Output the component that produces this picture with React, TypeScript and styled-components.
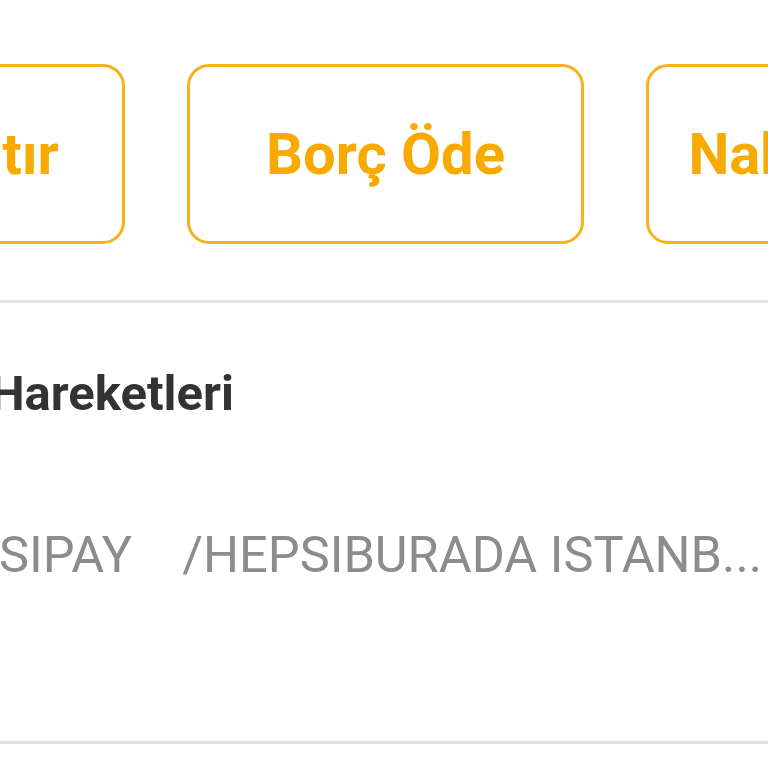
import React from "react";
import styled, { createGlobalStyle } from "styled-components";

const Global = createGlobalStyle`
  html, body { margin: 0; padding: 0; background: #ffffff; }
  body { font-family: Roboto, "Noto Sans", Arial, sans-serif; }
`;

const Page = styled.div`
  width: 768px;
  height: 768px;
  overflow: hidden;
  background: #ffffff;
`;

const ButtonRow = styled.div`
  display: flex;
  align-items: flex-start;
  gap: 62px;
  margin-left: -272px;
  padding-top: 64px;
`;

const ActionButton = styled.div`
  flex: 0 0 397px;
  height: 180px;
  box-sizing: border-box;
  padding-top: 58px;
  border: 3px solid #f5b21c;
  border-radius: 22px;
  background: #ffffff;
  cursor: pointer;
`;

const ButtonLabel = styled.span`
  display: block;
  text-align: center;
  font-family: Roboto, Arial, sans-serif;
  font-weight: 700;
  font-size: 58px;
  line-height: 58px;
  height: 58px;
  color: #f8aa00;
  white-space: nowrap;
`;

const Divider = styled.div<{ $top: number }>`
  margin-top: ${(p) => p.$top}px;
  height: 3px;
  background: #e2e2e2;
`;

const Section = styled.div`
  padding-top: 66px;
`;

const Title = styled.div`
  margin-left: -10px;
  font-family: Roboto, Arial, sans-serif;
  font-weight: 700;
  font-size: 49px;
  line-height: 49px;
  height: 49px;
  color: #333333;
  white-space: nowrap;
`;

const Merchant = styled.div`
  margin-top: 111px;
  margin-left: -1px;
  font-family: Roboto, Arial, sans-serif;
  font-weight: 400;
  font-size: 50.5px;
  line-height: 51px;
  height: 51px;
  color: #8c8c8c;
  white-space: pre;
`;

const actions = ["Limit Artır", "Borç Öde", "Nakit Avans"];

export default function App() {
  return (
    <Page>
      <Global />
      <ButtonRow>
        {actions.map((a) => (
          <ActionButton role="button" key={a}>
            <ButtonLabel>{a}</ButtonLabel>
          </ActionButton>
        ))}
      </ButtonRow>
      <Divider $top={56} />
      <Section>
        <Title>Hareketleri</Title>
        <Merchant>{"SIPAY    /HEPSIBURADA ISTANB..."}</Merchant>
      </Section>
      <Divider $top={161} />
    </Page>
  );
}
